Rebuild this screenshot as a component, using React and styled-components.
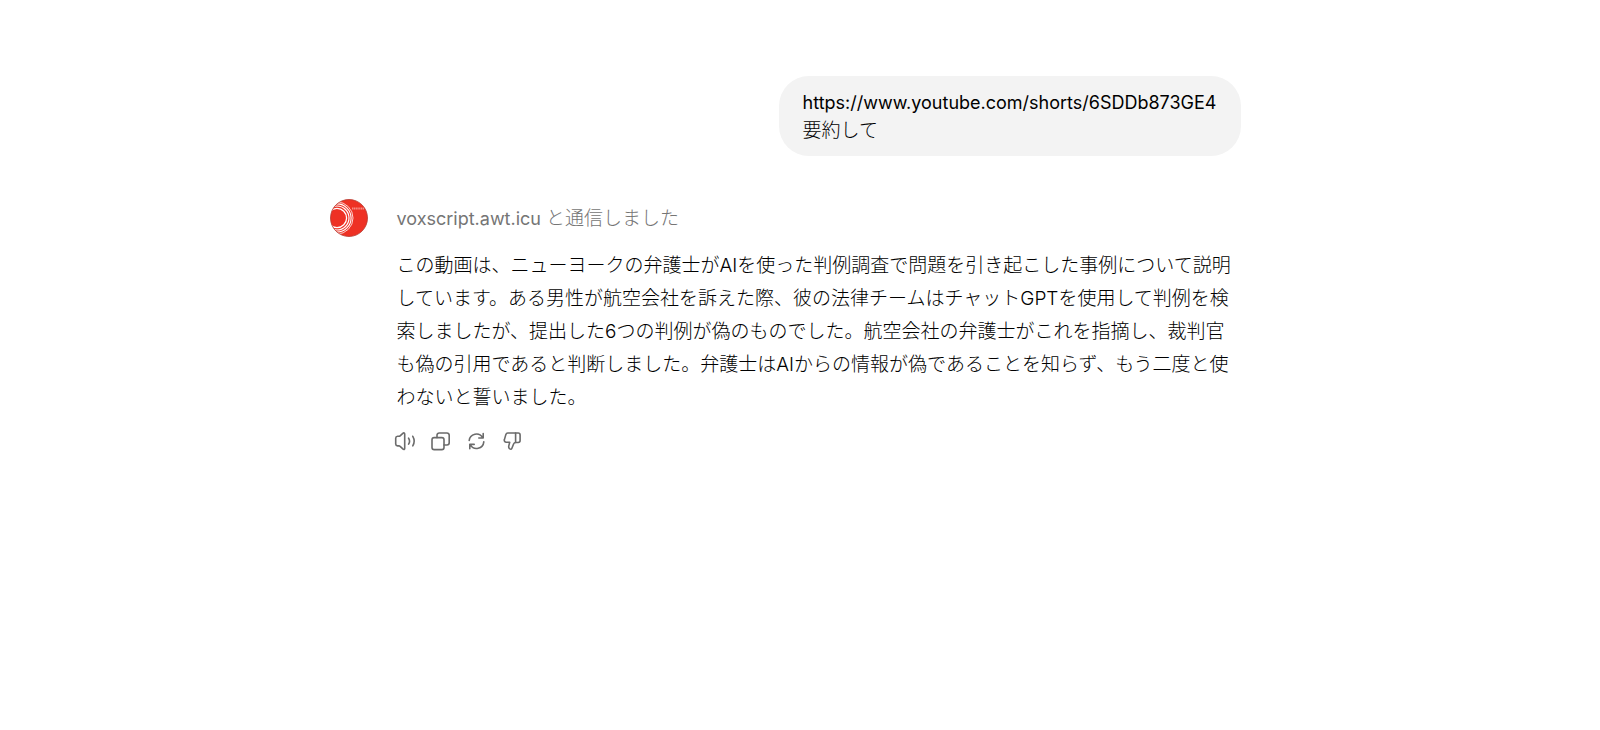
import React from "react";
import styled, { createGlobalStyle } from "styled-components";

const GlobalStyle = createGlobalStyle`
  body {
    margin: 0;
    background-color: #fff;
    color: #000;
    font-family: Inter, "Noto Sans CJK JP", sans-serif;
    font-size: 19px;
    font-weight: 300;
  }
`;

const AvatarLogo = () => (
  <svg width="38" height="38" viewBox="0 0 38 38" aria-hidden="true">
    <defs>
      <clipPath id="disc">
        <circle cx="19" cy="19" r="18.5" />
      </clipPath>
    </defs>
    <circle cx="19" cy="19" r="18.5" fill="#ee3124" />
    <g clipPath="url(#disc)" fill="none" stroke="#fff">
      <circle cx="7" cy="19" r="9.6" strokeWidth="1.3" />
      <circle cx="7" cy="19" r="12" strokeWidth="1.2" />
      <circle cx="7" cy="19" r="14.1" strokeWidth="1.1" />
      <circle cx="7" cy="19" r="16" strokeWidth="0.8" />
      <path d="M22 9.5h12" stroke="#f58f87" strokeWidth="2" strokeDasharray="1.3 0.5" />
    </g>
    <circle cx="19" cy="19" r="18.5" fill="none" stroke="#b5392f" strokeWidth="0.8" />
  </svg>
);

const SpeakerIcon = () => (
  <Icon viewBox="0 0 22 22">
    <path d="M10.7 3.9v14.6c0 .9-.9 1.3-1.6.7l-3-2.9c-.4-.3-.7-.4-1.1-.4H3.6A2 2 0 0 1 1.7 14V8.2a2 2 0 0 1 1.9-1.9H5c.4 0 .8-.1 1.1-.4l3-2.8c.7-.6 1.6-.1 1.6.8Z" />
    <path d="M14.6 8.2a5.4 5.4 0 0 1 0 5.9M18.8 6.3a9.6 9.6 0 0 1 0 9.6" />
  </Icon>
);

const CopyIcon = () => (
  <Icon viewBox="0 0 22 22">
    <rect x="2" y="7.6" width="12" height="12" rx="2.2" />
    <path d="M7 7.6V5.2A2.2 2.2 0 0 1 9.2 3H17a2.2 2.2 0 0 1 2.2 2.2v7.6A2.2 2.2 0 0 1 17 15h-3" />
  </Icon>
);

const RefreshIcon = () => (
  <Icon viewBox="0 0 22 22">
    <path d="M3.2 10.5A7.2 7.2 0 0 1 16.6 7.6M17.2 3.6v4.4h-4.4" />
    <path d="M17.8 11.9A7.2 7.2 0 0 1 4.4 14.8M3.8 18.8v-4.4h4.4" />
  </Icon>
);

const ThumbsDownIcon = () => (
  <Icon viewBox="0 0 22 22">
    <path d="M13.6 3H5.8a2 2 0 0 0-1.9 1.4L2.4 9.6a2 2 0 0 0 2 2.7h3.3l-.9 3.6c-.4 1.7.5 3.4 1.9 3.4.6 0 .9-.3 1.1-.8l1.8-4.5c.4-1 .9-1.5 2-1.5Z" />
    <path d="M13.6 3h2.6a1.9 1.9 0 0 1 1.9 1.9v5.7a1.9 1.9 0 0 1-1.9 1.9h-2.6" />
  </Icon>
);

const actions = [
  { label: "読み上げる", icon: SpeakerIcon },
  { label: "コピー", icon: CopyIcon },
  { label: "再生成", icon: RefreshIcon },
  { label: "良くない回答", icon: ThumbsDownIcon },
];

const App = () => (
  <>
    <GlobalStyle />
    <Thread>
      <UserMessage>
        <MessageUrl>https://www.youtube.com/shorts/6SDDb873GE4</MessageUrl>
        <div>要約して</div>
      </UserMessage>

      <AssistantMessage>
        <AvatarLogo />
        <Content>
          <Status>
            <Domain>voxscript.awt.icu</Domain>
            <span>と通信しました</span>
          </Status>
          <Answer>
            この動画は、ニューヨークの弁護士がAIを使った判例調査で問題を引き起こした事例について説明しています。ある男性が航空会社を訴えた際、彼の法律チームはチャットGPTを使用して判例を検索しましたが、提出した6つの判例が偽のものでした。航空会社の弁護士がこれを指摘し、裁判官も偽の引用であると判断しました。弁護士はAIからの情報が偽であることを知らず、もう二度と使わないと誓いました。
          </Answer>
          <Actions>
            {actions.map(({ label, icon: ActionIcon }) => (
              <ActionButton key={label} type="button" aria-label={label}>
                <ActionIcon />
              </ActionButton>
            ))}
          </Actions>
        </Content>
      </AssistantMessage>
    </Thread>
  </>
);

export default App;

const Thread = styled.main`
  display: flex;
  flex-direction: column;
  gap: 43px;
  max-width: 911px;
  margin: 0 auto;
  padding: 76px 30px 32px 0;
`;

const UserMessage = styled.div`
  align-self: flex-end;
  padding: 13px 24px 11px;
  border-radius: 30px;
  background-color: #f3f3f3;
  line-height: 28px;
`;

const MessageUrl = styled.div`
  font-size: 18px;
  font-weight: 400;
`;

const AssistantMessage = styled.article`
  display: flex;
  align-items: flex-start;
  gap: 29px;

  > svg {
    flex-shrink: 0;
  }
`;

const Content = styled.div`
  flex: 1;
  min-width: 0;
  padding-top: 1px;
`;

const Status = styled.div`
  display: flex;
  align-items: baseline;
  gap: 5px;
  color: #757575;
  line-height: 38px;
`;

const Domain = styled.span`
  font-size: 18px;
  font-weight: 400;
`;

const Answer = styled.p`
  margin: 11px 0 0;
  line-height: 33px;
`;

const Actions = styled.div`
  display: flex;
  gap: 4px;
  margin-top: 11px;
  margin-left: -8px;
`;

const ActionButton = styled.button`
  display: flex;
  align-items: center;
  justify-content: center;
  width: 32px;
  height: 32px;
  padding: 0;
  border: none;
  border-radius: 8px;
  background: transparent;
  color: #6b6b6b;
  cursor: pointer;

  &:hover {
    background-color: #f3f3f3;
  }
`;

const Icon = styled.svg`
  width: 22px;
  height: 22px;
  fill: none;
  stroke: currentColor;
  stroke-width: 1.6;
  stroke-linecap: round;
  stroke-linejoin: round;
`;
